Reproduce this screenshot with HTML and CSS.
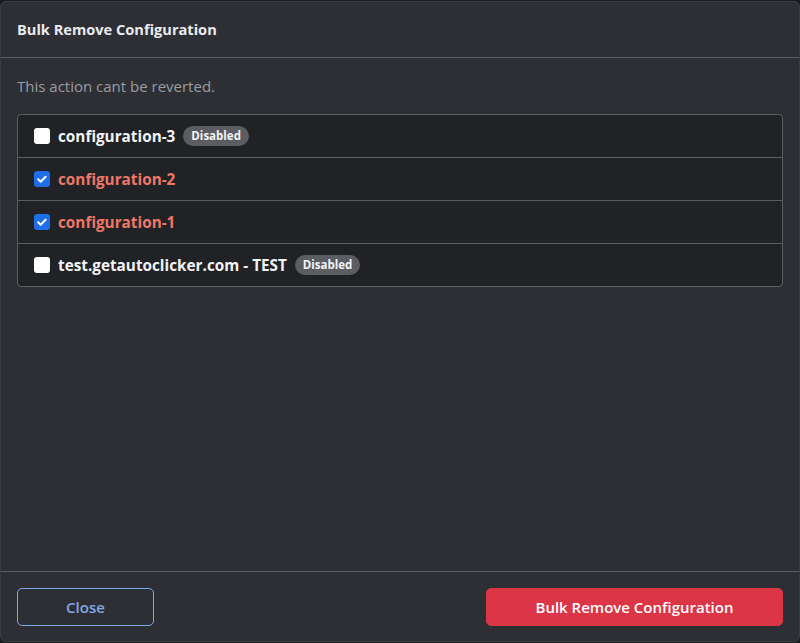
FILE: index.html
```html
<!DOCTYPE html>
<html>
<head>
<meta charset="utf-8">
<link rel="stylesheet" href="styles.css">
</head>
<body>
<div class="modal">
  <div class="modal-header">
    <h5 class="modal-title">Bulk Remove Configuration</h5>
  </div>
  <div class="modal-body">
    <p class="note">This action cant be reverted.</p>
    <ul class="list">
      <li class="item">
        <span class="check"></span>
        <span class="name">configuration-3</span>
        <span class="badge">Disabled</span>
      </li>
      <li class="item selected">
        <span class="check on"><svg viewBox="0 0 16 16" width="16" height="16"><path d="M4.2 8.3l2.4 2.4 5-5" fill="none" stroke="#fff" stroke-width="2" stroke-linecap="round" stroke-linejoin="round"/></svg></span>
        <span class="name">configuration-2</span>
      </li>
      <li class="item selected">
        <span class="check on"><svg viewBox="0 0 16 16" width="16" height="16"><path d="M4.2 8.3l2.4 2.4 5-5" fill="none" stroke="#fff" stroke-width="2" stroke-linecap="round" stroke-linejoin="round"/></svg></span>
        <span class="name">configuration-1</span>
      </li>
      <li class="item">
        <span class="check"></span>
        <span class="name">test.getautoclicker.com - TEST</span>
        <span class="badge">Disabled</span>
      </li>
    </ul>
  </div>
  <div class="modal-footer">
    <button class="btn btn-outline">Close</button>
    <button class="btn btn-danger">Bulk Remove Configuration</button>
  </div>
</div>
</body>
</html>
```
FILE: styles.css
```css
html, body {
  margin: 0;
  padding: 0;
  height: 100%;
  background: #1b1c1f;
}
body {
  font-family: "Open Sans", "Noto Sans", sans-serif;
  color: #dee2e6;
  padding: 1px 0 1px 0;
  box-sizing: border-box;
  height: 643px;
}
.modal {
  box-sizing: border-box;
  height: 641px;
  width: 800px;
  background: #2e2f34;
  border: 1px solid #3c3d42;
  border-radius: 6px;
  display: flex;
  flex-direction: column;
}
.modal-header {
  height: 56px;
  box-sizing: border-box;
  border-bottom: 1px solid #5d5e63;
  display: flex;
  align-items: center;
  padding: 0 16px 2px;
}
.modal-title {
  margin: 0;
  font-size: 14.6px;
  font-weight: 700;
  color: #e9ebee;
}
.modal-body {
  flex: 1;
  padding: 16px 16px;
}
.note {
  margin: 0 0 16px;
  font-size: 15px;
  color: #9a9ca1;
  line-height: 24px;
}
.list {
  list-style: none;
  margin: 0;
  padding: 0;
  border: 1px solid #5d5e63;
  border-radius: 4px;
  background: #212226;
  overflow: hidden;
}
.item {
  height: 43px;
  box-sizing: border-box;
  display: flex;
  align-items: center;
  padding: 0 16px 1px;
  border-top: 1px solid #5d5e63;
}
.item:first-child {
  border-top: none;
  height: 42px;
}
.check {
  width: 16px;
  height: 16px;
  box-sizing: border-box;
  border-radius: 3px;
  background: #ffffff;
  margin-right: 8px;
  display: flex;
  align-items: center;
  justify-content: center;
  flex: none;
}
.check.on {
  background: #1d6ee8;
}
.name {
  font-size: 15.3px;
  font-weight: 700;
  color: #f1f3f5;
}
.selected .name {
  color: #ef7766;
}
.badge {
  margin-left: 8px;
  background: #5b5d62;
  color: #f3f4f6;
  font-size: 11.5px;
  font-weight: 700;
  border-radius: 10px;
  padding: 2px 8px;
  line-height: 16px;
}
.modal-footer {
  height: 70px;
  box-sizing: border-box;
  border-top: 1px solid #5d5e63;
  display: flex;
  align-items: center;
  justify-content: space-between;
  padding: 0 16px;
}
.btn {
  font-family: inherit;
  font-size: 15px;
  font-weight: 600;
  height: 38px;
  border-radius: 5px;
  cursor: pointer;
}
.btn-outline {
  width: 137px;
  background: transparent;
  border: 1px solid #7aa8ee;
  color: #7fa9ea;
}
.btn-danger {
  width: 297px;
  background: #dc3545;
  border: 1px solid #dc3545;
  color: #ffffff;
}
```
